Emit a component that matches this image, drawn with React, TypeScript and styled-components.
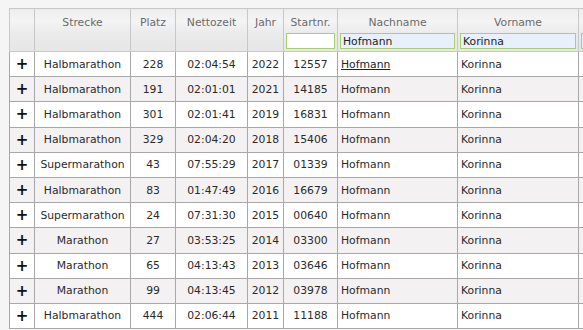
import styled, { createGlobalStyle } from 'styled-components';

const GlobalStyle = createGlobalStyle`
  html, body {
    margin: 0;
    overflow: hidden;
    background: #f5f5f5;
    font-family: "DejaVu Sans", Verdana, sans-serif;
  }
`;

type Result = {
  strecke: string;
  platz: number;
  zeit: string;
  jahr: number;
  startnr: string;
};

const results: Result[] = [
  { strecke: 'Halbmarathon', platz: 228, zeit: '02:04:54', jahr: 2022, startnr: '12557' },
  { strecke: 'Halbmarathon', platz: 191, zeit: '02:01:01', jahr: 2021, startnr: '14185' },
  { strecke: 'Halbmarathon', platz: 301, zeit: '02:01:41', jahr: 2019, startnr: '16831' },
  { strecke: 'Halbmarathon', platz: 329, zeit: '02:04:20', jahr: 2018, startnr: '15406' },
  { strecke: 'Supermarathon', platz: 43, zeit: '07:55:29', jahr: 2017, startnr: '01339' },
  { strecke: 'Halbmarathon', platz: 83, zeit: '01:47:49', jahr: 2016, startnr: '16679' },
  { strecke: 'Supermarathon', platz: 24, zeit: '07:31:30', jahr: 2015, startnr: '00640' },
  { strecke: 'Marathon', platz: 27, zeit: '03:53:25', jahr: 2014, startnr: '03300' },
  { strecke: 'Marathon', platz: 65, zeit: '04:13:43', jahr: 2013, startnr: '03646' },
  { strecke: 'Marathon', platz: 99, zeit: '04:13:45', jahr: 2012, startnr: '03978' },
  { strecke: 'Halbmarathon', platz: 444, zeit: '02:06:44', jahr: 2011, startnr: '11188' },
];

const widths = [25, 96, 45, 72, 36, 54, 120, 121, 120];

function App() {
  return (
    <>
      <GlobalStyle />
      <Page>
        <Grid>
          <colgroup>
            {widths.map((w, i) => (
              <col key={i} style={{ width: w }} />
            ))}
          </colgroup>
          <thead>
            <tr>
              <HeadCell />
              <HeadCell>Strecke</HeadCell>
              <HeadCell>Platz</HeadCell>
              <HeadCell>Nettozeit</HeadCell>
              <HeadCell>Jahr</HeadCell>
              <HeadCell>
                Startnr.
                <Filter defaultValue="" />
              </HeadCell>
              <HeadCell>
                Nachname
                <Filter $filled defaultValue="Hofmann" />
              </HeadCell>
              <HeadCell>
                Vorname
                <Filter $filled defaultValue="Korinna" />
              </HeadCell>
              <HeadCell>
                &nbsp;
                <Filter $filled defaultValue="" />
              </HeadCell>
            </tr>
          </thead>
          <tbody>
            {results.map((r, i) => (
              <Row key={r.jahr} $odd={i % 2 === 1}>
                <Expand>+</Expand>
                <Cell $center>{r.strecke}</Cell>
                <Cell $center>{r.platz}</Cell>
                <Cell $center>{r.zeit}</Cell>
                <Cell $center>{r.jahr}</Cell>
                <Cell $center>{r.startnr}</Cell>
                <Cell>{i === 0 ? <NameLink>Hofmann</NameLink> : 'Hofmann'}</Cell>
                <Cell>Korinna</Cell>
                <Cell />
              </Row>
            ))}
          </tbody>
        </Grid>
      </Page>
    </>
  );
}

export default App;

const Page = styled.div`
  padding: 8px 0 0 9px;
  width: 583px;
  height: 330px;
  overflow: hidden;
  box-sizing: border-box;
`;

const Grid = styled.table`
  table-layout: fixed;
  border-collapse: collapse;
  width: 689px;
  font-size: 10.8px;
  color: #2a2a2a;
`;

const HeadCell = styled.th`
  height: 40px;
  padding: 0 2px 2px;
  vertical-align: top;
  font-weight: normal;
  color: #6a6a6a;
  text-align: center;
  border: 1px solid #c8c8c8;
  background: linear-gradient(#eeeeee 0%, #f4f4f4 28%, #ebebeb 55%, #e6e6e6 100%);
  line-height: 27px;
`;

const Filter = styled.input<{ $filled?: boolean }>`
  display: block;
  width: 100%;
  height: 16px;
  margin: -3px 0 0;
  padding: 0 2px;
  box-sizing: border-box;
  border: 1px solid #a9d06c;
  background: ${(p) => (p.$filled ? '#e8f0fe' : '#ffffff')};
  font-family: "DejaVu Sans", Verdana, sans-serif;
  font-size: 10.8px;
  color: #222;
  outline: none;
`;

const Row = styled.tr<{ $odd: boolean }>`
  height: 25.2px;
  background: ${(p) => (p.$odd ? '#f3f1f1' : '#ffffff')};
`;

const Cell = styled.td<{ $center?: boolean }>`
  padding: 0 3px;
  border: 1px solid #a8a8a8;
  text-align: ${(p) => (p.$center ? 'center' : 'left')};
  white-space: nowrap;
  overflow: hidden;
`;

const Expand = styled.td`
  border: 1px solid #a8a8a8;
  text-align: center;
  font-weight: bold;
  font-size: 15px;
  color: #111;
`;

const NameLink = styled.span`
  text-decoration: underline;
  color: #222;
`;
